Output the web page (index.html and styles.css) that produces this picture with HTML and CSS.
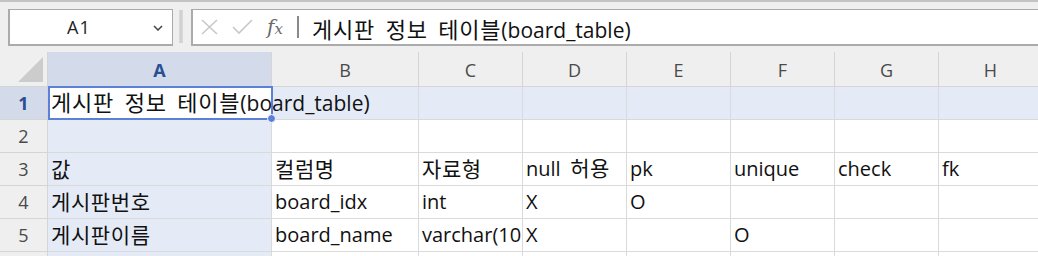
FILE: index.html
```html
<!DOCTYPE html>
<html lang="ko">
<head>
<meta charset="utf-8">
<link rel="stylesheet" href="styles.css">
</head>
<body>
<div class="toolbar">
  <div class="namebox">
    <span class="name">A1</span>
    <svg class="chev" width="10" height="6" viewBox="0 0 10 6"><polyline points="1,1 5,5 9,1" fill="none" stroke="#444" stroke-width="1.5"/></svg>
  </div>
  <div class="sep"></div>
  <div class="formula">
    <svg class="ico" width="20" height="18" viewBox="0 0 20 18"><path d="M2 2 L17 16 M17 2 L2 16" stroke="#c8c8c8" stroke-width="1.6" fill="none"/></svg>
    <svg class="ico" width="22" height="16" viewBox="0 0 22 16"><polyline points="1,8 7,14 20,1" stroke="#c8c8c8" stroke-width="1.6" fill="none"/></svg>
    <span class="fx"><i class="f">f</i><i class="x">x</i></span>
    <span class="bar"></span>
    <span class="ftext title"><span class="ko">게시판 정보 테이블</span>(board_table)</span>
  </div>
</div>
<div class="grid">
  <div class="corner"><span class="tri"></span></div>
  <div class="ch sel">A</div><div class="ch">B</div><div class="ch">C</div><div class="ch">D</div><div class="ch">E</div><div class="ch">F</div><div class="ch">G</div><div class="ch">H</div>

  <div class="rh sel">1</div>
  <div class="c active"><span class="title"><span class="ko">게시판 정보 테이블</span>(board_table)</span></div><div class="c hl"></div><div class="c hl"></div><div class="c hl"></div><div class="c hl"></div><div class="c hl"></div><div class="c hl"></div><div class="c hl"></div>

  <div class="rh">2</div>
  <div class="c hl"></div><div class="c"></div><div class="c"></div><div class="c"></div><div class="c"></div><div class="c"></div><div class="c"></div><div class="c"></div>

  <div class="rh">3</div>
  <div class="c hl"><span class="ko">값</span></div><div class="c"><span class="ko">컬럼명</span></div><div class="c"><span class="ko">자료형</span></div><div class="c"><span>null<span class="ko"> 허용</span></span></div><div class="c">pk</div><div class="c">unique</div><div class="c">check</div><div class="c">fk</div>

  <div class="rh">4</div>
  <div class="c hl"><span class="ko">게시판번호</span></div><div class="c">board_idx</div><div class="c">int</div><div class="c">X</div><div class="c">O</div><div class="c"></div><div class="c"></div><div class="c"></div>

  <div class="rh">5</div>
  <div class="c hl"><span class="ko">게시판이름</span></div><div class="c">board_name</div><div class="c clip">varchar(10</div><div class="c">X</div><div class="c"></div><div class="c">O</div><div class="c"></div><div class="c"></div>

  <div class="rh"></div>
  <div class="c hl"></div><div class="c"></div><div class="c"></div><div class="c"></div><div class="c"></div><div class="c"></div><div class="c"></div><div class="c"></div>
</div>
</body>
</html>
```

FILE: styles.css
```css
* { box-sizing: border-box; }
html, body { margin: 0; padding: 0; }
body {
  width: 1038px;
  height: 256px;
  overflow: hidden;
  background: #fff;
  font-family: "Open Sans", "Noto Sans CJK KR", sans-serif;
  color: #111;
}
.ko {
  font-size: 21px;
  letter-spacing: 0.6px;
  word-spacing: 3.5px;
}
.title { font-size: 21px; }
.title .ko {
  font-size: 22px;
  letter-spacing: 0.8px;
  word-spacing: 4px;
}
.toolbar {
  height: 52px;
  background: #efefef;
  border-top: 2px solid #c4c4c4;
  display: flex;
  align-items: flex-start;
  padding: 7px 0 0 8px;
}
.namebox {
  width: 165px;
  height: 37px;
  background: #fff;
  border: 1px solid #ababab;
  border-left-width: 2px;
  border-bottom-width: 2px;
  display: flex;
  align-items: center;
  padding-left: 57px;
  padding-right: 9px;
}
.name {
  font-size: 18px;
  color: #222;
  flex: 1;
  letter-spacing: 1px;
}
.chev { margin-top: 1px; }
.sep {
  width: 4px;
  height: 33px;
  margin: 1px 8px 0 6px;
  background: #d2d2d2;
  border-left: 1px solid #d8d8d8;
  border-right: 1px solid #d8d8d8;
}
.formula {
  flex: 1;
  height: 37px;
  background: #fff;
  border: 1px solid #ababab;
  border-left-width: 2px;
  border-bottom-width: 2px;
  border-right: none;
  display: flex;
  align-items: center;
  padding-left: 7px;
}
.ico { margin-right: 12px; }
.fx {
  font-family: "DejaVu Serif", serif;
  color: #6a6a6a;
  font-size: 20px;
  margin-left: 1px;
  width: 30px;
}
.fx .f { font-style: italic; }
.fx .x { font-size: 15px; font-style: italic; }
.bar {
  width: 2px;
  height: 22px;
  background: #8a8a8a;
  margin-right: 13px;
}
.ftext {
  color: #111;
  white-space: nowrap;
  margin-top: 1px;
}
.grid {
  display: grid;
  grid-template-columns: 48px 224px 147px repeat(6, 104px);
  grid-template-rows: 35px repeat(6, 33px);
}
.corner, .ch, .rh {
  background: #efefef;
  border-right: 1px solid #d5d5d5;
  border-bottom: 1px solid #d5d5d5;
  color: #4a4a4a;
  font-size: 18px;
}
.corner { position: relative; }
.tri {
  position: absolute;
  right: 4px;
  bottom: 4px;
  width: 0;
  height: 0;
  border-left: 25px solid transparent;
  border-bottom: 25px solid #cccccc;
}
.ch {
  display: flex;
  align-items: center;
  justify-content: center;
  padding-top: 1px;
}
.rh {
  display: flex;
  align-items: center;
  justify-content: center;
}
.ch.sel, .rh.sel {
  background: #d3dbea;
  color: #2c4f94;
  font-weight: 700;
}
.c {
  border-right: 1px solid #dadada;
  border-bottom: 1px solid #dadada;
  font-size: 20px;
  line-height: 26px;
  padding: 0 3px 3px 3px;
  display: flex;
  align-items: flex-end;
  white-space: nowrap;
  overflow: hidden;
}
.c.clip { padding-right: 0; }
.c.hl { background: #e5ebf6; }
.c.active {
  background: #fff;
  overflow: visible;
  position: relative;
  z-index: 2;
}
.c.active::after {
  content: "";
  position: absolute;
  left: 0;
  top: -1px;
  right: -2px;
  bottom: -1px;
  border: 2px solid #5b80d6;
}
.c.active::before {
  content: "";
  position: absolute;
  right: -5px;
  bottom: -4px;
  width: 7px;
  height: 7px;
  border-radius: 50%;
  background: #5b80d6;
  border: 1px solid #fff;
  z-index: 3;
}
```
